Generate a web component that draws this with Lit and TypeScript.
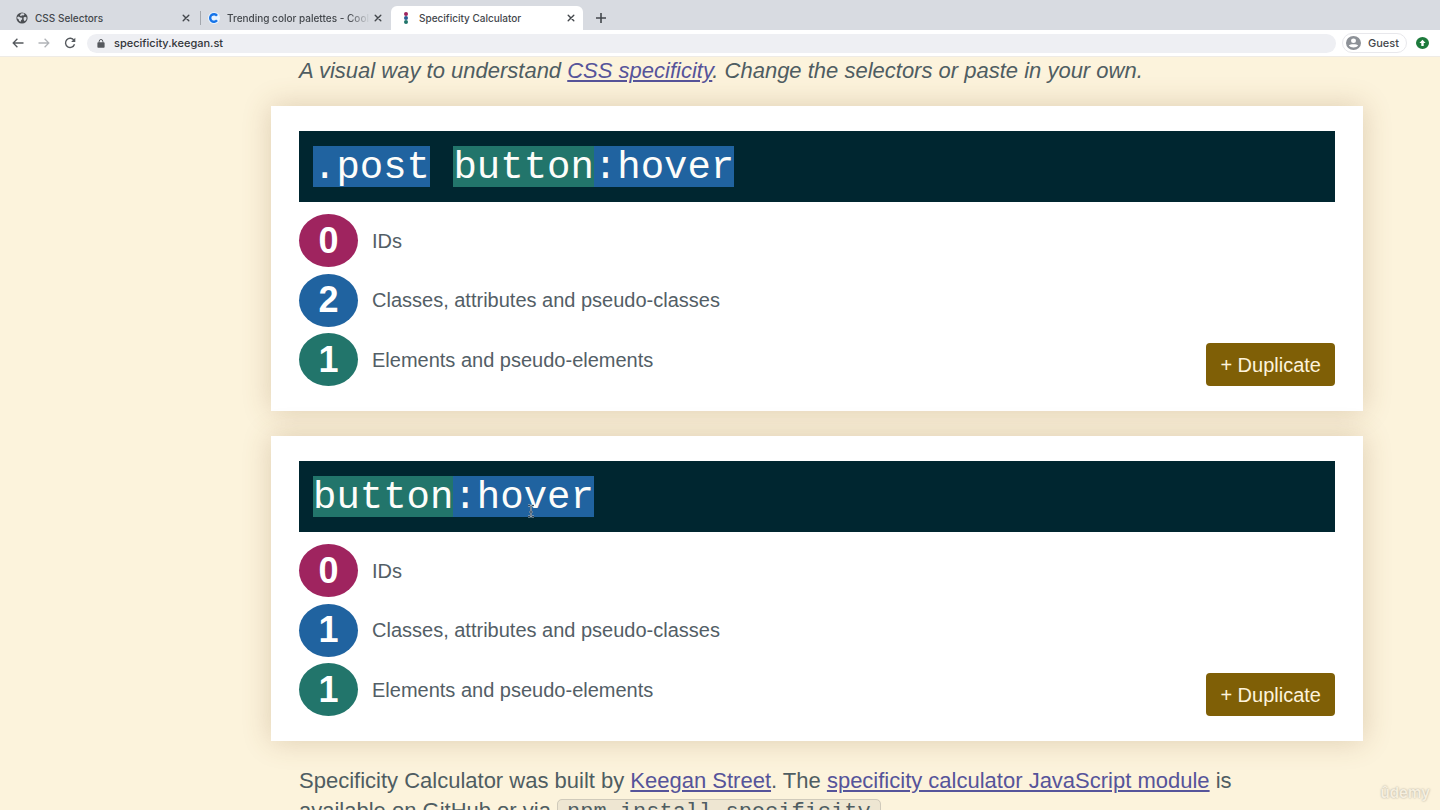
import { LitElement, html, svg, css } from "lit";
import { customElement, property } from "lit/decorators.js";
import { styleMap } from "lit/directives/style-map.js";

type Kind = "id" | "class" | "element" | "none";
interface Part {
  kind: Kind;
  text: string;
}

const closeIcon = svg`<svg width="8" height="8" viewBox="0 0 8 8" fill="none" stroke="currentColor" stroke-width="1.4" stroke-linecap="round"><path d="M1.2 1.2l5.6 5.6M6.8 1.2L1.2 6.8"/></svg>`;

@customElement("browser-chrome")
class BrowserChrome extends LitElement {
  static styles = css`
    :host { display: block; font-family: Inter, "Liberation Sans", sans-serif; color: #43474c; }
    button { border: 0; padding: 0; background: none; color: inherit; font: inherit; display: flex; align-items: center; justify-content: center; }
    svg { display: block; flex: none; }
    .strip { display: flex; align-items: flex-end; height: 30px; background: #d8dbe1; }
    .tab { display: flex; align-items: center; height: 24px; width: 200px; padding: 0 10px 0 16px; box-sizing: border-box; font-size: 10px; font-weight: 500; line-height: 14px; }
    .tab.second { width: 190px; padding: 0 9px 0 7px; }
    .tab.active { width: 192px; background: #fff; border-radius: 6px 6px 0 0; padding: 0 8px 0 9px; }
    .divider { width: 1px; height: 14px; margin-bottom: 5px; background: #a3a7ad; }
    .title { flex: 1; margin-left: 7px; white-space: nowrap; overflow: hidden; }
    .fade { -webkit-mask-image: linear-gradient(90deg, #000 85%, transparent); mask-image: linear-gradient(90deg, #000 85%, transparent); margin-right: 4px; }
    .new { width: 36px; height: 24px; }
    .bar { display: flex; align-items: center; box-sizing: border-box; height: 27px; padding: 0 10px 0 5px; background: #fff; border-bottom: 1px solid #eeebe6; }
    .nav { width: 26px; height: 20px; color: #55595e; }
    .nav.off { color: #b1b4b8; }
    .address { flex: 1; display: flex; align-items: center; height: 19px; margin-right: 6px; padding: 0 10px; border-radius: 10px; background: #eeeff3; }
    .url { flex: 1; border: 0; outline: 0; background: none; padding: 0; margin-left: 9px; font: 500 11px/16px Inter, "Liberation Sans", sans-serif; color: #33363a; }
    .guest { height: 20px; padding: 0 7px 0 3px; border: 1px solid #e8e8ec; border-radius: 10px; gap: 7px; font-size: 11px; font-weight: 500; line-height: 16px; }
    .update { width: 13px; margin: 0 1px 0 9px; }
    .navs { display: flex; width: 82px; }
  `;

  render() {
    return html`
      <div class="strip">
        <div class="tab">
          <svg width="12" height="12" viewBox="0 0 12 12"><circle cx="6" cy="6" r="5.6" fill="#4b4e52"/><path d="M1.3 5l1.500-.6 1.400 1 1.900.4.1 1.400-1.200 1-.2 1.600-1.600-.8-.6-1.800-1.300-.8zM5 1.500l2.500-.2 1 1.100-1 1.100-1.600-.2-.7 1-1.300-.9zM7.600 5.600l1.600-.9 1.500 1.100-.6 2.200-1.500 1.200-.9-1.400z" fill="#d8dbe1"/></svg>
          <span class="title">CSS Selectors</span>
          <button aria-label="Close CSS Selectors">${closeIcon}</button>
        </div>
        <div class="divider"></div>
        <div class="tab second">
          <svg width="12" height="12" viewBox="0 0 12 12"><circle cx="6" cy="6" r="6" fill="#e9f4ff"/><path d="M9 3.7A3.8 3.8 0 1 0 9 8.3" fill="none" stroke="#1674e8" stroke-width="2.4"/></svg>
          <span class="title fade">Trending color palettes - Coolors</span>
          <button aria-label="Close Trending color palettes">${closeIcon}</button>
        </div>
        <div class="tab active">
          <svg width="12" height="12" viewBox="0 0 12 12"><circle cx="6" cy="2.1" r="2" fill="#9e235e"/><circle cx="6" cy="6" r="2" fill="#2a5d94"/><circle cx="6" cy="9.9" r="2" fill="#21756b"/></svg>
          <span class="title">Specificity Calculator</span>
          <button aria-label="Close Specificity Calculator">${closeIcon}</button>
        </div>
        <button class="new" aria-label="New tab"><svg width="10" height="10" viewBox="0 0 10 10" stroke="currentColor" stroke-width="1.6"><path d="M5 0v10M0 5h10"/></svg></button>
      </div>
      <div class="bar">
        <div class="navs">
          <button class="nav" aria-label="Back"><svg width="12" height="10" viewBox="0 0 12 10" fill="none" stroke="currentColor" stroke-width="1.3"><path d="M11.5 5H1.2M5.4.8L1.2 5l4.2 4.2"/></svg></button>
          <button class="nav off" aria-label="Forward"><svg width="12" height="10" viewBox="0 0 12 10" fill="none" stroke="currentColor" stroke-width="1.3"><path d="M.5 5h10.3M6.6.8L10.8 5 6.6 9.2"/></svg></button>
          <button class="nav" aria-label="Reload"><svg width="12" height="12" viewBox="0 0 12 12"><path d="M10 3.4A4.600 4.600 0 1 0 10.500 7.300" fill="none" stroke="currentColor" stroke-width="1.4"/><path d="M11.300.8v4.200H7.100z" fill="currentColor"/></svg></button>
        </div>
        <div class="address">
          <svg width="8" height="9" viewBox="0 0 8 9"><rect x=".4" y="3.3" width="7.2" height="5.5" rx=".8" fill="#55585d"/><path d="M2.200 3.600V2.300a1.800 1.800 0 0 1 3.600 0v1.300" fill="none" stroke="#55585d"/></svg>
          <input class="url" aria-label="Address" value="specificity.keegan.st" />
        </div>
        <button class="guest">
          <svg width="15" height="14" viewBox="0 0 15 14"><ellipse cx="7.5" cy="7" rx="7.5" ry="7" fill="#8d9197"/><ellipse cx="7.5" cy="4.7" rx="2.5" ry="2.2" fill="#fff"/><path d="M2.8 9.6C4 7.7 11 7.7 12.2 9.6 10.5 12.2 4.5 12.2 2.8 9.6z" fill="#fff"/></svg>
          Guest
        </button>
        <button class="update" aria-label="Update available"><svg width="13" height="12" viewBox="0 0 13 12"><ellipse cx="6.5" cy="6" rx="6.5" ry="6" fill="#1d7a3c"/><path d="M6.5 2.800L9.600 6H7.700v2.900H5.300V6H3.400z" fill="#fff"/></svg></button>
      </div>
    `;
  }
}

@customElement("specificity-card")
class SpecificityCard extends LitElement {
  @property({ attribute: false }) parts: Part[] = [];

  static styles = css`
    :host { display: block; padding: 25px 28px; background: #fff; box-shadow: 0 0 27px rgba(125, 85, 40, 0.24); }
    .selector { display: grid; padding: 15px 14px; background: #002630; }
    .marks, .field { grid-area: 1 / 1; height: 41px; font: 39px/41px "Liberation Mono", monospace; }
    .marks { display: flex; }
    .class { background: #2063a0; }
    .element { background: #22756b; }
    .id { background: #9f245f; }
    .field { position: relative; min-width: 0; width: 100%; box-sizing: border-box; margin: 0; padding: 4px 0 0; border: 0; outline: 0; background: none; color: #fdfdfa; }
    .result { display: flex; justify-content: space-between; align-items: flex-end; margin-top: 12px; }
    .counts { display: grid; align-content: space-between; min-height: 172px; margin: 0; padding: 0; list-style: none; }
    .row { display: flex; align-items: center; gap: 14px; font-size: 20px; line-height: 24px; color: #535e66; }
    .badge { display: flex; align-items: center; justify-content: center; width: 59px; height: 53px; border-radius: 50%; color: #fff; font-size: 36px; font-weight: 700; line-height: 40px; }
    .duplicate { height: 43px; padding: 0 14px; border: 0; border-radius: 4px; background: #7f5f06; color: #fdf3dc; font: 20px/24px "Liberation Sans", Arial, sans-serif; }
  `;

  private count(kind: Kind) {
    return this.parts.filter((p) => p.kind === kind).length;
  }

  render() {
    const rows: [Kind, string][] = [
      ["id", "IDs"],
      ["class", "Classes, attributes and pseudo-classes"],
      ["element", "Elements and pseudo-elements"],
    ];
    return html`
      <div class="selector">
        <div class="marks" aria-hidden="true">
          ${this.parts.map((p) => html`<span class=${p.kind} style=${styleMap({ width: `${p.text.length}ch` })}></span>`)}
        </div>
        <input class="field" aria-label="Selector" spellcheck="false" .value=${this.parts.map((p) => p.text).join("")} />
      </div>
      <div class="result">
        <ul class="counts">
          ${rows.map(([kind, label]) => html`<li class="row"><span class="badge ${kind}">${this.count(kind)}</span><span>${label}</span></li>`)}
        </ul>
        <button class="duplicate">+ Duplicate</button>
      </div>
    `;
  }
}

@customElement("app-root")
class AppRoot extends LitElement {
  static styles = css`
    :host { display: flex; flex-direction: column; position: relative; height: 100vh; overflow: hidden; background: #fcf3dc; font-family: "Liberation Sans", Arial, sans-serif; }
    .page { flex: 1; min-height: 0; overflow: hidden; padding: 0 77px 0 271px; color: #4f5d62; font-size: 22px; line-height: 30px; }
    .intro { margin: 0 28px 22px; font-style: italic; line-height: 27px; }
    .cards { display: grid; gap: 25px; }
    .about { margin: 25px 56px 0 28px; }
    a { color: #56549a; text-decoration-thickness: 2px; text-underline-offset: 2px; }
    .package { padding: 0 9px; border: 1px solid #d0cabb; border-radius: 5px; background: #eee6d2; font: 22px/24px "Liberation Mono", monospace; }
    .pointer { position: absolute; left: 527px; top: 504px; }
    .mark { position: absolute; right: 10px; bottom: 6px; font: 600 15px/22px Inter, sans-serif; color: #f6efdf; text-shadow: 0 0 2px #a9a397; }
  `;

  private first: Part[] = [
    { kind: "class", text: ".post" },
    { kind: "none", text: " " },
    { kind: "element", text: "button" },
    { kind: "class", text: ":hover" },
  ];
  private second: Part[] = this.first.slice(2);

  render() {
    return html`
      <browser-chrome></browser-chrome>
      <main class="page">
        <p class="intro">A visual way to understand <a href="#specificity">CSS specificity</a>. Change the selectors or paste in your own.</p>
        <div class="cards">
          <specificity-card .parts=${this.first}></specificity-card>
          <specificity-card .parts=${this.second}></specificity-card>
        </div>
        <p class="about">Specificity Calculator was built by <a href="#keegan">Keegan Street</a>. The <a href="#module">specificity calculator JavaScript module</a> is available on GitHub or via <code class="package">npm install specificity</code>.</p>
      </main>
      <svg class="pointer" width="8" height="14" viewBox="0 0 8 14" fill="none"><path d="M1 1.5h2L4 2.5l1-1h2M4 2.5v9M1 12.5h2l1-1 1 1h2M2.5 8h3" stroke="#b9c6d0" stroke-width="2"/><path d="M1 1.5h2L4 2.5l1-1h2M4 2.5v9M1 12.5h2l1-1 1 1h2M2.5 8h3" stroke="#33475a"/></svg>
      <span class="mark">ûdemy</span>
    `;
  }
}
